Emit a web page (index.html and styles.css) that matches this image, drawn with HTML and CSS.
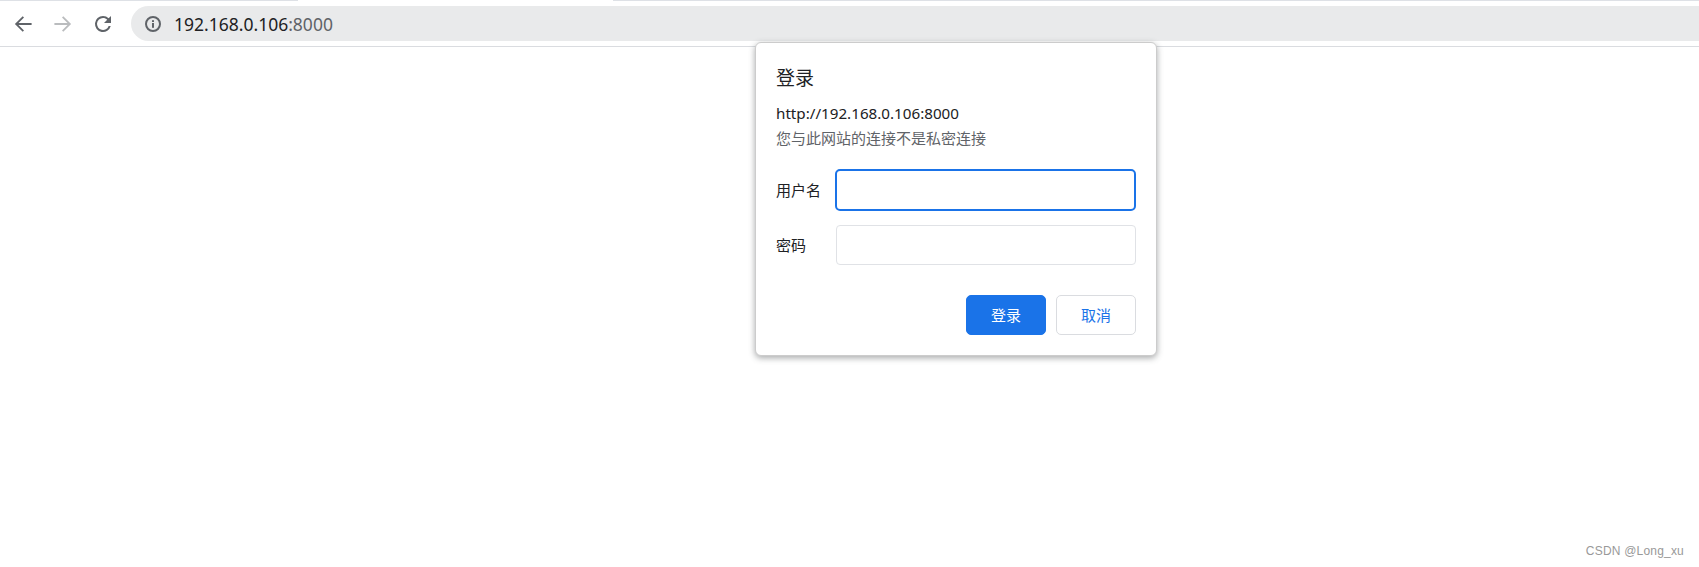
FILE: index.html
```html
<!DOCTYPE html>
<html lang="zh-CN">
<head>
    <meta charset="UTF-8">
    <title>192.168.0.106:8000</title>
    <link rel="stylesheet" href="styles.css">
</head>
<body>
    <div class="tab-strip">
        <div class="tab-edge"></div>
        <div class="tab-active"></div>
        <div class="tab-edge tab-edge-rest"></div>
    </div>
    <div class="toolbar">
        <svg class="nav-icon" viewBox="0 0 24 24" width="24" height="24"><path fill="#5f6368" d="M20.6 11H7.5l5.5-5.5L11.7 4.2 3.9 12l7.8 7.8 1.3-1.3L7.5 13h13.1z"/></svg>
        <svg class="nav-icon" viewBox="0 0 24 24" width="24" height="24"><path fill="#babcbe" d="M12.3 4.2L11 5.5l5.5 5.5H3.4v2h13.1L11 18.5l1.3 1.3 7.8-7.8z"/></svg>
        <svg class="nav-icon" viewBox="0 0 24 24" width="24" height="24"><path fill="#5f6368" d="M17.65 6.35A7.96 7.96 0 0 0 12 4a8 8 0 1 0 7.73 10h-2.08A6 6 0 1 1 12 6c1.66 0 3.14.69 4.22 1.78L13 11h7V4z"/></svg>
        <div class="omnibox">
            <svg class="info-icon" viewBox="0 0 16 16" width="16" height="16"><circle cx="8" cy="8" r="7" fill="none" stroke="#5f6368" stroke-width="2"/><rect x="7" y="7" width="2" height="4.8" fill="#5f6368"/><rect x="7" y="4.2" width="2" height="1.8" fill="#5f6368"/></svg>
            <span class="url">192.168.0.106<span class="port">:8000</span></span>
        </div>
    </div>

    <div class="auth-dialog">
        <h2 class="dialog-title">登录</h2>
        <div class="dialog-origin">http://192.168.0.106:8000</div>
        <div class="dialog-note">您与此网站的连接不是私密连接</div>
        <div class="form-row">
            <label class="form-label">用户名</label>
            <div class="text-input focused"></div>
        </div>
        <div class="form-row">
            <label class="form-label">密码</label>
            <div class="text-input"></div>
        </div>
        <div class="dialog-buttons">
            <div class="btn btn-primary">登录</div>
            <div class="btn">取消</div>
        </div>
    </div>

    <div class="watermark">CSDN @Long_xu</div>
</body>
</html>
```
FILE: styles.css
```css
* {
    margin: 0;
    padding: 0;
    box-sizing: border-box;
}

body {
    font-family: "Noto Sans CJK SC", "Liberation Sans", sans-serif;
    background: white;
    height: 567px;
    overflow: hidden;
}

.tab-strip {
    height: 1px;
    display: flex;
}

.tab-edge {
    width: 298px;
    background: #dee1e6;
}

.tab-edge-rest {
    flex: 1;
}

.tab-active {
    width: 315px;
    background: white;
}

.toolbar {
    height: 46px;
    display: flex;
    align-items: center;
    padding: 5px 0 5px 11px;
    border-bottom: 1px solid #dadce0;
    background: white;
    gap: 16px;
}

.nav-icon {
    flex: none;
}

.omnibox {
    flex: 1;
    height: 35px;
    background: #e9eaeb;
    border-radius: 18px 0 0 18px;
    display: flex;
    align-items: center;
    padding-left: 14px;
}

.info-icon {
    margin-right: 13px;
}

.url {
    font-family: "Noto Sans", "Liberation Sans", sans-serif;
    font-size: 17.5px;
    color: #202124;
}

.port {
    color: #5f6368;
}

.auth-dialog {
    position: absolute;
    left: 755px;
    top: 42px;
    width: 402px;
    height: 314px;
    background: white;
    border-radius: 6px;
    padding: 20px;
    border: 1px solid #ccc;
    box-shadow: 0 2px 6px rgba(60,64,67,0.45);
}

.dialog-title {
    font-size: 19px;
    font-weight: normal;
    color: #202124;
    line-height: 27px;
    margin-bottom: 13px;
}

.dialog-origin {
    font-family: "Noto Sans", "Liberation Sans", sans-serif;
    font-size: 15.2px;
    color: #202124;
    line-height: 20px;
}

.dialog-note {
    font-size: 15px;
    color: #5f6368;
    line-height: 20px;
    margin-top: 5px;
    margin-bottom: 21px;
}

.form-row {
    display: flex;
    align-items: center;
    margin-bottom: 14px;
}

.form-label {
    width: 60px;
    padding-bottom: 2px;
    font-size: 15px;
    color: #202124;
}

.text-input {
    width: 300px;
    height: 40px;
    border: 1px solid #e0e2e6;
    border-radius: 4px;
}

.text-input.focused {
    width: 302px;
    height: 42px;
    margin-left: -1px;
    border: 2.5px solid #1a73e8;
    border-radius: 5px;
}

.dialog-buttons {
    display: flex;
    justify-content: flex-end;
    gap: 10px;
    margin-top: 30px;
}

.btn {
    width: 80px;
    height: 40px;
    padding-bottom: 2px;
    border: 1px solid #dadce0;
    border-radius: 5px;
    color: #1a73e8;
    font-size: 15px;
    display: flex;
    align-items: center;
    justify-content: center;
}

.btn-primary {
    background: #1a73e8;
    border-color: #1a73e8;
    color: white;
}

.watermark {
    position: absolute;
    right: 15px;
    bottom: 9px;
    font-family: "Liberation Sans", sans-serif;
    font-size: 12px;
    letter-spacing: 0.2px;
    color: #999;
}
```
